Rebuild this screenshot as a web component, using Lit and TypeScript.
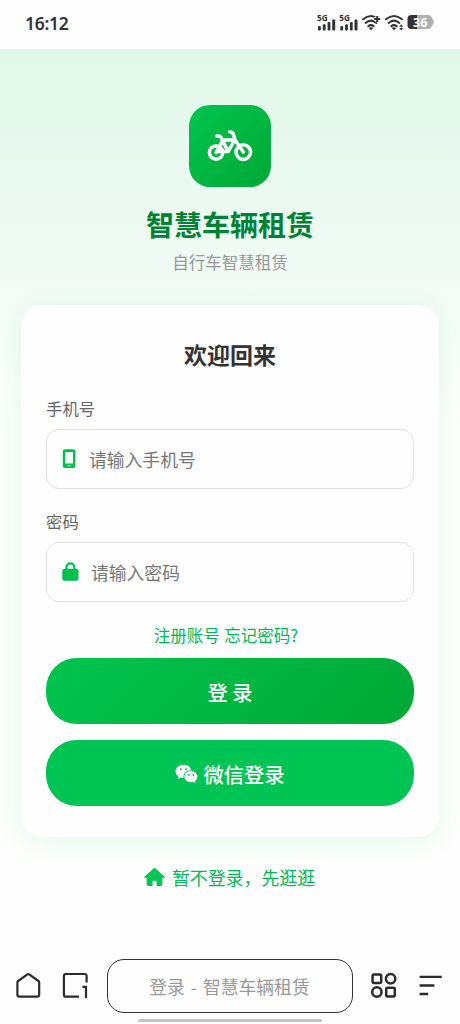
import { LitElement, html, css, svg } from "lit";
import { customElement } from "lit/decorators.js";

const signal = svg`
  <rect x="0" y="11" width="2.8" height="4.4" rx="1"/>
  <rect x="4.8" y="9.2" width="2.8" height="6.2" rx="1"/>
  <rect x="9.6" y="7" width="2.8" height="8.4" rx="1"/>
  <rect x="14.2" y="4.4" width="3" height="11" rx="1"/>`;

const wifi = svg`
  <g fill="none" stroke="#333" stroke-width="2" stroke-linecap="round">
    <path d="M1 4.3Q9 -2.3 17 4.3"/><path d="M3.6 7.9Q9 3.4 14.4 7.9"/><path d="M6.2 11.2Q9 9 11.8 11.2"/>
  </g>
  <path d="M6.8 12.8Q9 11.6 11.2 12.8L9 15.4z" fill="#333"/>`;

@customElement("status-bar")
class StatusBar extends LitElement {
  static styles = css`
    :host { display: flex; align-items: flex-start; justify-content: space-between; height: 49px; padding: 0 25px; box-sizing: border-box; background: #fdfdfd; color: #333; }
    .time { font: 600 17.5px/22px "Noto Sans", sans-serif; margin-top: 12px; width: 44px; white-space: nowrap; letter-spacing: -.3px; }
    .icons { display: flex; margin-top: 14px; }
    .icons svg { display: block; overflow: visible; }
    .net { font: 700 8.2px "Noto Sans", sans-serif; }
    .pct { font: 700 12.5px "Noto Sans", sans-serif; }
  `;
  render() {
    return html`
      <div class="time">16:12</div>
      <div class="icons">
        <svg width="118" height="18" viewBox="0 0 118 18" fill="#333">
          <g transform="translate(1 1)"><text class="net" x="-1" y="6.2">5G</text>${signal}</g>
          <g transform="translate(23.3 1)"><text class="net" x="-1" y="6.2">5G</text>${signal}</g>
          <g transform="translate(45 1)">${wifi}<path d="M15.2 .8v6.4M12 4h6.4" stroke="#fdfdfd" stroke-width="3.4"/><path d="M15.2 1v6M12.200 4h6" stroke="#333" stroke-width="2"/></g>
          <g transform="translate(68 1)">${wifi}<path d="M16.200 9.300l2 2.500h-4zM16.200 15.500l2-2.500h-4z"/></g>
          <path d="M96 1h-1.5a4 4 0 0 0-4 4v6a4 4 0 0 0 4 4h5.5v-14z"/>
          <path d="M100 1h11.2a4 4 0 0 1 3.5 2.2q1 1.300 1 2.300 1 .5 1 2.500t-1 2.500q0 1-1 2.300a4 4 0 0 1-3.500 2.200h-11.200z" fill="#b0b0b0"/>
          <text class="pct" x="96" y="12.500" fill="#fff">36</text>
        </svg>
      </div>`;
  }
}

@customElement("login-field")
class LoginField extends LitElement {
  static properties = { label: {}, placeholder: {}, icon: {} };
  declare label: string;
  declare placeholder: string;
  declare icon: string;
  static styles = css`
    :host { display: block; }
    .label { font-size: 16.4px; line-height: 24px; color: #666; }
    .box { display: flex; align-items: center; height: 60px; box-sizing: border-box; margin-top: 9px; border: 1.4px solid #e2e2e2; border-radius: 13px; padding-left: 15px; font-size: 17.8px; color: #777; }
    .box svg { display: block; flex: none; margin-right: 12px; }
  `;
  render() {
    return html`
      <div class="label">${this.label}</div>
      <div class="box">
        ${this.icon === "phone"
          ? html`<svg width="15" height="20" viewBox="0 0 15 20"><path fill="#00c050" fill-rule="evenodd" d="M3.400.2h7.400a2.600 2.600 0 0 1 2.600 2.600v13.600a2.600 2.600 0 0 1-2.600 2.600H3.400A2.600 2.600 0 0 1 .8 16.400V2.800A2.600 2.600 0 0 1 3.400.2zM3.200 3v11.600h7.800V3zM5.600 16.200v1h3v-1z"/></svg>`
          : html`<svg width="17" height="20" viewBox="0 0 17 20"><rect x=".3" y="6.800" width="16.200" height="12" rx="2.400" fill="#00c050"/><path d="M4.500 8.500V5.300a3.900 3.900 0 0 1 7.800 0v3" fill="none" stroke="#00c050" stroke-width="2.200"/></svg>`}
        <span>${this.placeholder}</span>
      </div>`;
  }
}

@customElement("browser-bar")
class BrowserBar extends LitElement {
  static styles = css`
    :host { display: flex; flex-direction: column; align-items: center; height: 66px; }
    .row { display: grid; grid-template-columns: 28px 28px 247px 28px 25px; align-items: center; column-gap: 18px; width: 430px; height: 55px; box-sizing: border-box; justify-content: start; }
    .row svg { display: block; }
    .address { display: flex; align-items: center; justify-content: center; width: 246px; height: 54px; box-sizing: border-box; margin-left: -.5px; border: 1.4px solid #333; border-radius: 17px; font-size: 17.8px; color: #999; white-space: pre; word-spacing: 2px; }
    .apps { margin-left: -2px; }
    .menu { margin-left: .8px; }
    .pill { width: 184px; height: 3px; margin-top: 5.500px; border-radius: 2px; background: #c4c4c4; }
  `;
  render() {
    return html`
      <div class="row">
        <svg width="28" height="28" viewBox="0 0 28 28" fill="none" stroke="#2c2c2c" stroke-width="2.200"><path d="M2.400 10.600Q2.400 9.600 3.200 9L12.400 2.400Q13.300 1.800 14.200 2.400L23.400 9Q24.200 9.600 24.200 10.600V22.600Q24.200 24.700 22.100 24.700H4.500Q2.400 24.700 2.400 22.600z"/></svg>
        <svg width="28" height="28" viewBox="0 0 28 28" fill="none" stroke="#2c2c2c" stroke-width="2.200"><path d="M18 24.700H4.900Q2.900 24.700 2.900 22.700V4Q2.900 2 4.900 2H23.600Q25.600 2 25.600 4V10.500M21.400 14.800H25V26"/></svg>
        <div class="address">登录 - 智慧车辆租赁</div>
        <svg class="apps" width="28" height="28" viewBox="0 0 28 28" fill="none" stroke="#2c2c2c" stroke-width="2.500"><rect x="2.600" y="2.400" width="8.600" height="8.600" rx="1.400"/><circle cx="20.600" cy="6.700" r="4.700"/><circle cx="6.900" cy="20" r="4.700"/><rect x="16.200" y="15.800" width="8.600" height="8.600" rx="1.400"/></svg>
        <svg class="menu" width="25" height="28" viewBox="0 0 25 28" fill="none" stroke="#2c2c2c" stroke-width="2.300"><path d="M.6 4.800H22.800M.6 13.500H15.400M.6 22H9.200"/></svg>
      </div>
      <div class="pill"></div>`;
  }
}

@customElement("app-root")
class AppRoot extends LitElement {
  static styles = css`
    :host { display: flex; flex-direction: column; width: 460px; height: 1024px; overflow: hidden; background: #fdfefd; font-family: "Noto Sans CJK SC", sans-serif; }
    .page { flex: 1; display: flex; flex-direction: column; align-items: center; background: linear-gradient(180deg, #e0f7e9 0, #fdfefd 380px); }
    .logo { display: block; width: 82px; height: 82px; margin-top: 56px; border-radius: 21px; background: linear-gradient(135deg, #00c54f, #00a834); }
    .title { margin-top: 17px; font-size: 28px; line-height: 40px; font-weight: 700; color: #008236; }
    .sub { margin-top: 6px; font-size: 16.500px; line-height: 24px; color: #999; }
    .card { width: 418px; height: 532px; box-sizing: border-box; margin-top: 31px; padding: 32px 25px 0; border-radius: 21px; background: #fefefe; box-shadow: 0 4px 26px rgba(0, 200, 83, .1); }
    .welcome { text-align: center; font-size: 23px; line-height: 34px; font-weight: 700; color: #333; }
    .phone { margin-top: 25px; }
    .pass { margin-top: 20px; }
    .links { margin-top: 21px; padding-right: 8px; text-align: center; font-size: 16.500px; line-height: 24px; word-spacing: .8px; color: #00ba55; }
    .btn { display: flex; align-items: center; justify-content: center; width: 368px; height: 66.300px; border-radius: 31px; color: #fff; font-size: 20.300px; font-weight: 500; }
    .login { margin-top: 11px; background: linear-gradient(135deg, #00c54f, #00a834); }
    .btn span { padding-top: 1px; }
    .wechat { margin-top: 15.700px; background: #00c554; }
    .wechat svg { margin-top: 1px; margin-right: 5px; }
    .skip { display: flex; align-items: center; margin-top: 26px; padding-right: 1px; height: 27px; font-size: 17.900px; color: #00ba55; }
    .skip svg { margin-right: 7px; }
  `;
  render() {
    return html`
      <status-bar></status-bar>
      <div class="page">
        <svg class="logo" viewBox="0 0 82 82" fill="none" stroke="#fff" stroke-width="3.500" stroke-linecap="round" stroke-linejoin="round">
          <circle cx="27.100" cy="47.600" r="6.700"/>
          <circle cx="54.300" cy="47.100" r="7.300"/>
          <path d="M27.100 47.600L33.600 35.600L39.200 46.500H29M33.600 35H45.600L39.200 46.500M33.600 35.600L31.900 32.200Q31.200 31 30 31H27.600M54.300 47.100L46 35L44.600 30Q43.800 27 40.600 26.800"/>
        </svg>
        <div class="title">智慧车辆租赁</div>
        <div class="sub">自行车智慧租赁</div>
        <div class="card">
          <div class="welcome">欢迎回来</div>
          <login-field class="phone" label="手机号" placeholder="请输入手机号" icon="phone"></login-field>
          <login-field class="pass" label="密码" placeholder="请输入密码" icon="lock"></login-field>
          <div class="links">注册账号 忘记密码?</div>
          <div class="btn login"><span>登 录</span></div>
          <div class="btn wechat">
            <svg width="23" height="20" viewBox="0 0 23 20"><path fill="#fff" d="M8.600.8C4 .8.6 3.800.6 7.400c0 2.100 1.100 3.900 2.900 5.100l-.8 2.500 2.900-1.500c1 .3 2 .4 3 .4A6.800 6.800 0 0 1 8.500 12.500C8.500 9 11.700 6.200 16 6.200h.4C15.600 3 12.500.8 8.600.8z"/><path fill="#fff" d="M16 7.100c-3.900 0-6.600 2.500-6.600 5.500 0 3.100 2.700 5.700 6.600 5.700.8 0 1.600-.1 2.300-.4l2.200 1.200-.6-2c1.600-1 2.600-2.700 2.600-4.500 0-3-2.700-5.500-6.500-5.500z"/><g fill="#00c554"><circle cx="5.800" cy="5.300" r="1"/><circle cx="11" cy="5.300" r="1"/><circle cx="13.900" cy="11" r=".9"/><circle cx="18.300" cy="11" r=".9"/></g></svg>
            <span>微信登录</span>
          </div>
        </div>
        <div class="skip">
          <svg width="21" height="20" viewBox="0 0 21 20"><path fill="#00c554" stroke="#00c554" stroke-width="1.200" stroke-linejoin="round" d="M10.500 1.400L20.200 10.200H17.800V17Q17.800 18.500 16.300 18.500H13.200V13.200H8V18.500H4.700Q3.200 18.500 3.200 17V10.200H.8z"/></svg>
          <span>暂不登录，先逛逛</span>
        </div>
      </div>
      <browser-bar></browser-bar>`;
  }
}
